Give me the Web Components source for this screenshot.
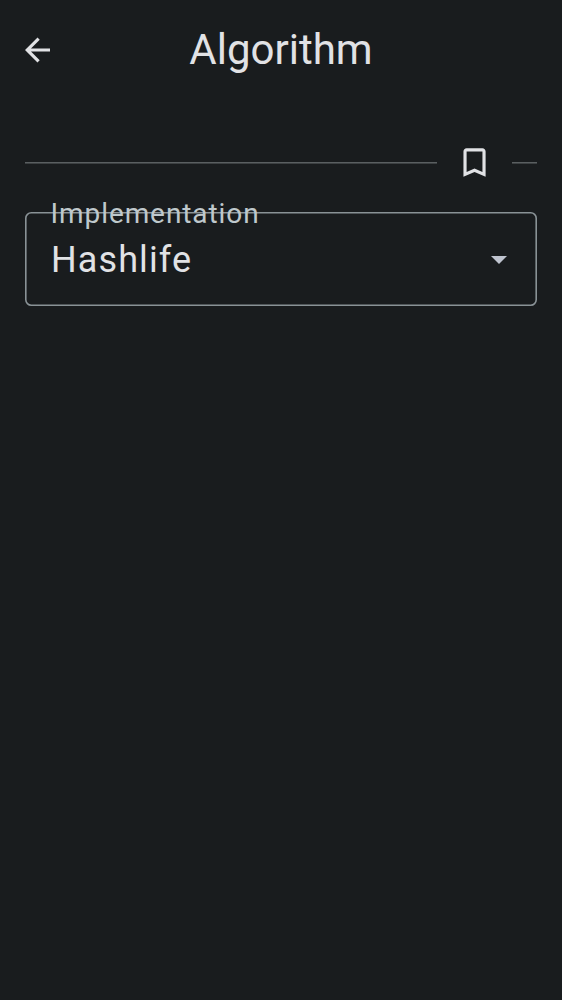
<!DOCTYPE html>
<html lang="en"><head><meta charset="utf-8"><title>Algorithm</title>
<style>html,body{margin:0;height:100%;background:#191c1e;font-family:Roboto,sans-serif;color:#e1e2e5}</style></head><body>
<app-screen><app-header heading="Algorithm"></app-header><bookmark-divider></bookmark-divider><select-field label="Implementation">Hashlife</select-field></app-screen>
<script>
const define=(name,html)=>customElements.define(name,class extends HTMLElement{
constructor(){super();const r=this.attachShadow({mode:'open'});r.innerHTML=html;
r.querySelectorAll('[data-attr]').forEach(e=>e.textContent=this.getAttribute(e.dataset.attr)||'');}});
define('app-screen',`<style>:host{display:block;box-sizing:border-box;height:100vh;padding:0 25px;overflow:hidden;background:#191c1e}</style><slot></slot>`);
define('app-header',`<style>:host{display:grid;grid-template-columns:25px 1fr 25px;align-items:center;height:100px}
h1{margin:0;text-align:center;font-weight:400;font-size:42px;line-height:50px}svg{display:block}</style>
<svg width="25" height="26" viewBox="4 4 16 16"><path fill="currentColor" d="M20 11H7.83l5.59-5.59L12 4l-8 8 8 8 1.41-1.41L7.83 13H20v-2z"/></svg><h1 data-attr="heading"></h1>`);
define('bookmark-divider',`<style>:host{display:grid;grid-template-columns:412px 75px 25px;align-items:center;height:50px;margin-top:38px}
i{height:2px;background:linear-gradient(#5a5f61 50%,#3c4042 50%)}svg{display:block;justify-self:center}</style>
<i></i><svg width="38" height="38" viewBox="0.3 0.3 24 24"><path fill="currentColor" d="M17 3H7c-1.1 0-1.99.9-1.99 2L5 21l7-3 7 3V5c0-1.1-.9-2-2-2zm0 15l-5-2.18L7 18V5h10v13z"/></svg><i></i>`);
define('select-field',`<style>:host{display:flex;position:relative;box-sizing:border-box;height:94px;margin-top:24px;padding:2px 25px 0 26px;align-items:center;justify-content:space-between}
.value{font-size:36px;letter-spacing:1.1px;line-height:44px}.label{position:absolute;left:25.5px;top:-15px;font-size:28px;line-height:34px;letter-spacing:.92px;color:#bfc8cc}
.outline{position:absolute;inset:0;width:100%;height:100%}.arrow{display:block;margin-right:5px}</style>
<svg class="outline" viewBox="0 0 512 94"><rect x=".8" y=".8" width="510.4" height="92.4" rx="5.5" fill="none" stroke="#899296" stroke-width="1.6"/></svg>
<span class="label" data-attr="label"></span><span class="value"><slot></slot></span><svg class="arrow" width="16" height="8" viewBox="0 0 16 8"><path fill="#bfc4cf" d="M0 0h16L8 8z"/></svg>`);
</script></body></html>
